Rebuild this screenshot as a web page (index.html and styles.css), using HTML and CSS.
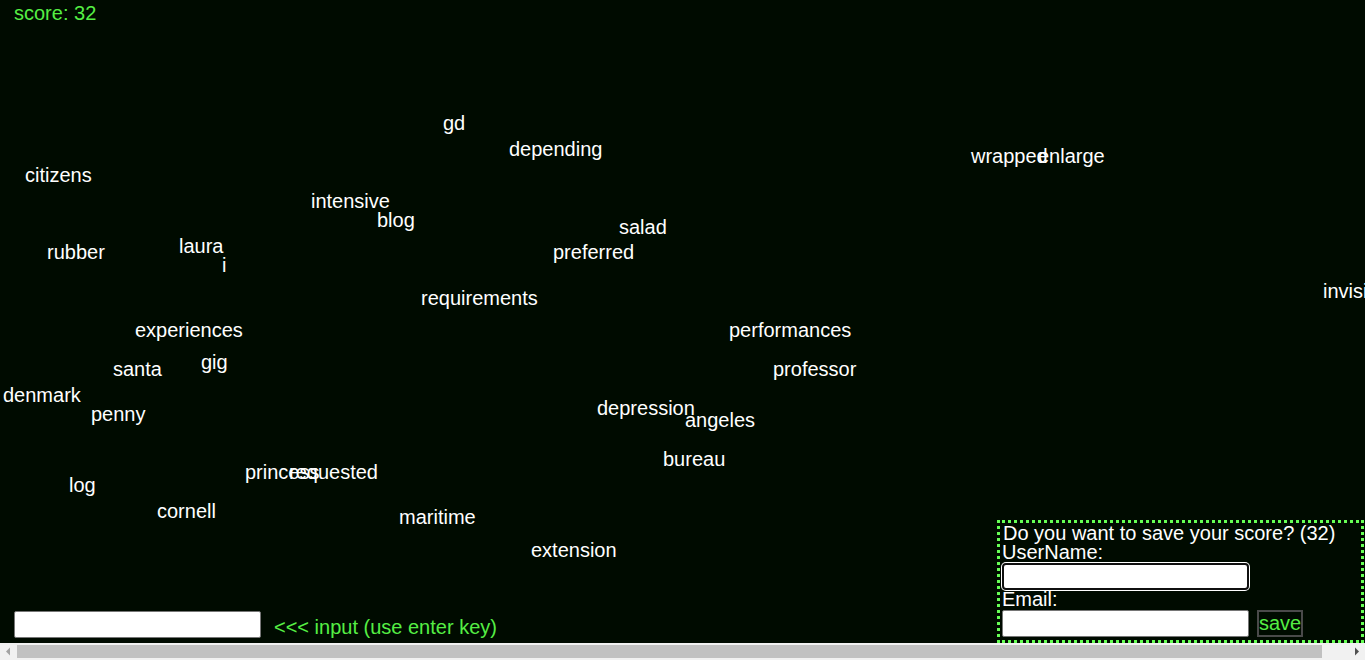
FILE: index.html
```html
<!DOCTYPE html>
<html lang="en">
<head>
<meta charset="utf-8">
<title>Type the words</title>
<link rel="stylesheet" href="styles.css">
</head>
<body>
<div class="page">
  <main class="field">
    <div class="score">score: 32</div>

    <div class="word" style="left:443px;top:112px">gd</div>
    <div class="word" style="left:509px;top:138px">depending</div>
    <div class="word" style="left:25px;top:164px">citizens</div>
    <div class="word" style="left:971px;top:145px">wrapped</div>
    <div class="word" style="left:1038px;top:145px">enlarge</div>
    <div class="word" style="left:311px;top:190px">intensive</div>
    <div class="word" style="left:377px;top:209px">blog</div>
    <div class="word" style="left:619px;top:216px">salad</div>
    <div class="word" style="left:179px;top:235px">laura</div>
    <div class="word" style="left:47px;top:241px">rubber</div>
    <div class="word" style="left:553px;top:241px">preferred</div>
    <div class="word" style="left:222px;top:254px">i</div>
    <div class="word" style="left:1323px;top:280px">invisible</div>
    <div class="word" style="left:421px;top:287px">requirements</div>
    <div class="word" style="left:135px;top:319px">experiences</div>
    <div class="word" style="left:729px;top:319px">performances</div>
    <div class="word" style="left:201px;top:351px">gig</div>
    <div class="word" style="left:113px;top:358px">santa</div>
    <div class="word" style="left:773px;top:358px">professor</div>
    <div class="word" style="left:3px;top:384px">denmark</div>
    <div class="word" style="left:597px;top:397px">depression</div>
    <div class="word" style="left:91px;top:403px">penny</div>
    <div class="word" style="left:685px;top:409px">angeles</div>
    <div class="word" style="left:663px;top:448px">bureau</div>
    <div class="word" style="left:245px;top:461px">princess</div>
    <div class="word" style="left:289px;top:461px">requested</div>
    <div class="word" style="left:69px;top:474px">log</div>
    <div class="word" style="left:157px;top:500px">cornell</div>
    <div class="word" style="left:399px;top:506px">maritime</div>
    <div class="word" style="left:531px;top:539px">extension</div>

    <div class="bottom">
      <div class="entry">
        <input class="guess" type="text" aria-label="word input">
        <span class="hint">&lt;&lt;&lt; input (use enter key)</span>
      </div>
      <form class="save">
        <div class="line">Do you want to save your score? (32)</div>
        <div class="line">UserName:</div>
        <input class="field-in focused" type="text" aria-label="UserName">
        <div class="line">Email:</div>
        <div class="row">
          <input class="field-in" type="text" aria-label="Email">
          <button class="save-btn" type="button">save</button>
        </div>
      </form>
    </div>
  </main>

  <div class="hscroll">
    <div class="sb-btn">
      <svg width="17" height="17" viewBox="0 0 17 17"><path d="M6 8.5 L10 4.5 L10 12.5 Z" fill="#a3a3a3"/></svg>
    </div>
    <div class="sb-track">
      <div class="sb-thumb"></div>
    </div>
    <div class="sb-btn">
      <svg width="17" height="17" viewBox="0 0 17 17"><path d="M11 8.5 L7 4.5 L7 12.5 Z" fill="#505050"/></svg>
    </div>
  </div>
</div>
</body>
</html>
```

FILE: styles.css
```css
html, body {
  margin: 0;
  padding: 0;
  overflow: hidden;
  background: #000b00;
}

body {
  font-family: "Liberation Sans", Arial, sans-serif;
  font-size: 20px;
  color: #ffffff;
}

.page {
  width: 1365px;
  height: 660px;
  display: flex;
  flex-direction: column;
  overflow: hidden;
}

.field {
  flex: 1;
  position: relative;
  display: flex;
  flex-direction: column;
  justify-content: space-between;
  overflow: hidden;
}

.score {
  color: #55ee44;
  margin: 2px 0 0 14px;
  line-height: 23px;
}

.word {
  position: absolute;
  line-height: 23px;
  white-space: nowrap;
  color: #ffffff;
}

.bottom {
  display: flex;
  justify-content: space-between;
  align-items: flex-end;
}

.entry {
  display: flex;
  align-items: flex-end;
  gap: 13px;
  padding: 0 0 5px 14px;
}

.guess {
  box-sizing: border-box;
  width: 247px;
  height: 27px;
  margin: 0;
  border: 1px solid #767676;
  border-radius: 2px;
  background: #ffffff;
}

.hint {
  color: #55ee44;
  line-height: 23px;
  margin-bottom: -1px;
}

.save {
  box-sizing: border-box;
  width: 367px;
  margin: 0 1px 0 0;
  border: 3px dotted #66ff55;
  padding: 1px 0 3px 2px;
  display: flex;
  flex-direction: column;
  align-items: flex-start;
  color: #ffffff;
}

.line {
  line-height: 19px;
  white-space: nowrap;
}

.save .line:first-child {
  margin-left: 1px;
}

.field-in {
  box-sizing: border-box;
  width: 247px;
  height: 27px;
  margin: 1px 0 0 0;
  border: 1px solid #767676;
  border-radius: 2px;
  background: #ffffff;
}

.field-in.focused {
  border: 2px solid #101010;
  border-radius: 4px;
  box-shadow: 0 0 0 1px #ffffff;
}

.row {
  display: flex;
  gap: 8px;
  margin-top: 1px;
}

.row .field-in {
  margin: 0;
}

.save-btn {
  box-sizing: border-box;
  width: 46px;
  height: 27px;
  margin: 0;
  padding: 0;
  border: 2px solid #4a4a4a;
  background: #000b00;
  color: #55ee44;
  font-family: "Liberation Sans", Arial, sans-serif;
  font-size: 20px;
  line-height: 23px;
}

.hscroll {
  height: 17px;
  flex: none;
  display: flex;
  background: #f1f1f1;
}

.sb-btn {
  width: 17px;
  height: 17px;
  flex: none;
}

.sb-btn svg {
  display: block;
}

.sb-track {
  flex: 1;
  padding: 2px 26px 2px 0;
}

.sb-thumb {
  height: 13px;
  background: #c1c1c1;
}
```
